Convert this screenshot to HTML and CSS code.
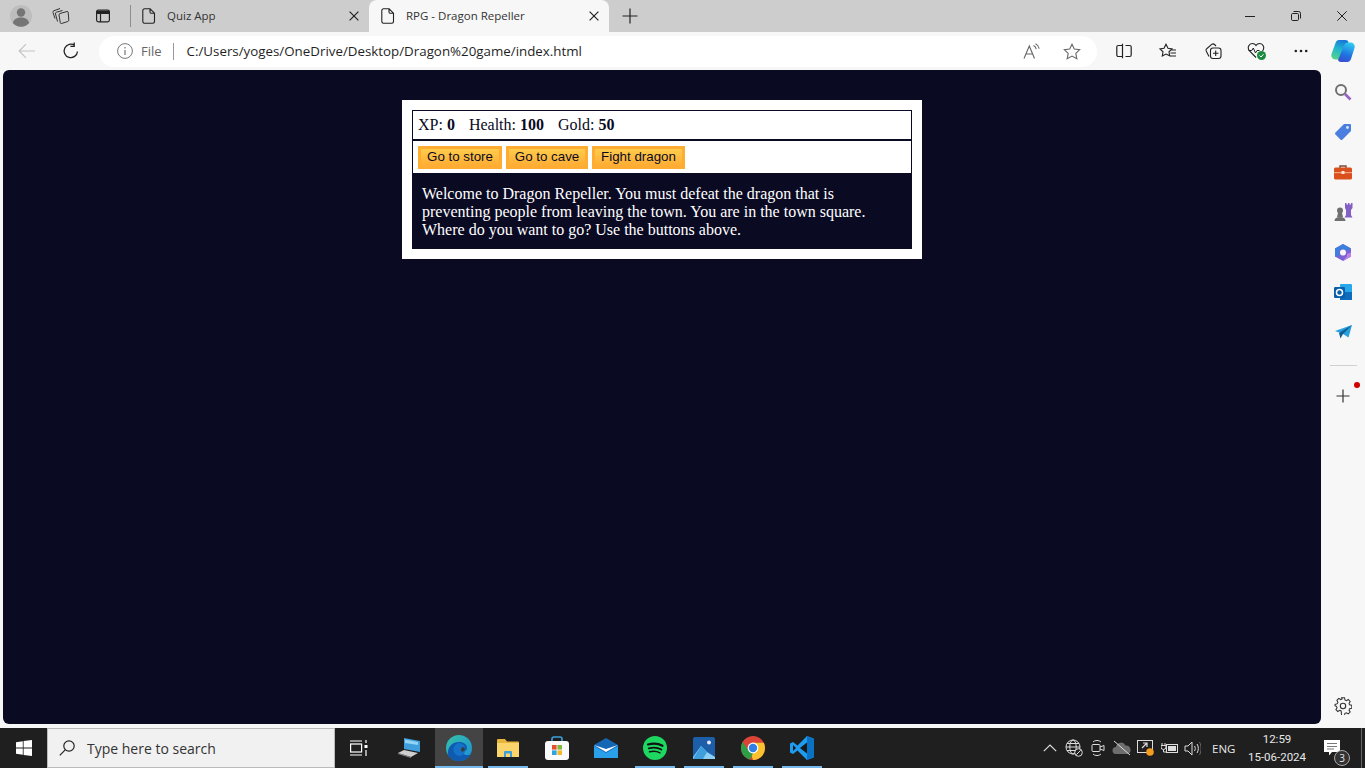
FILE: index.html
```html
<!DOCTYPE html>
<html lang="en">
<head>
    <meta charset="UTF-8">
    <title>RPG - Dragon Repeller</title>
    <link rel="stylesheet" href="styles.css">
</head>
<body>
    <div class="tabstrip">
        <span class="strip-btn profile">
            <svg width="22" height="22" viewBox="0 0 22 22"><circle cx="11" cy="11" r="11" fill="#bdbdbd"/><circle cx="11" cy="7.5" r="4.2" fill="#757575"/><path d="M2.8 18c1-4 4.2-5.6 8.2-5.6s7.2 1.6 8.2 5.6a11 11 0 0 1-16.4 0z" fill="#757575"/></svg>
        </span>
        <span class="strip-btn workspaces">
            <svg width="18" height="18" viewBox="0 0 18 18" fill="none" stroke="#333" stroke-width="1"><path d="M8 6.500 15 4.500a1 1 0 0 1 1.200.8L16.800 13a1.500 1.500 0 0 1-1 1.500L9.500 16.500a1 1 0 0 1-1.200-.8L7 8a1.500 1.500 0 0 1 1-1.500z"/><path d="M5.500 14.500 3.500 7a1.500 1.500 0 0 1 1-1.800L10.500 3.500"/><path d="M3 11.500 1 5.500a1.500 1.500 0 0 1 1-1.800L8 1.500"/></svg>
        </span>
        <span class="strip-btn vtabs">
            <svg width="16" height="16" viewBox="0 0 16 16" fill="none" stroke="#222" stroke-width="1.2"><rect x="1.6" y="2.1" width="12.8" height="11.8" rx="1.8"/><path d="M1.6 4.500h12.800" stroke-width="3"/><path d="M5.5 5v9"/></svg>
        </span>
        <span class="strip-sep"></span>
        <div class="tab">
            <svg class="page-icon" width="14" height="16" viewBox="0 0 14 16" fill="none" stroke="#222" stroke-width="1.1"><path d="M2.5.8h5.6l4.4 4.4v8.3a1.7 1.7 0 0 1-1.7 1.7H2.5A1.7 1.7 0 0 1 .8 13.5v-11A1.7 1.7 0 0 1 2.5.8zM8 .8v3.1A1.4 1.4 0 0 0 9.4 5.3h3.1"/></svg>
            <span class="tab-title">Quiz App</span>
            <svg class="tab-close" width="10" height="10" viewBox="0 0 10 10" stroke="#222" stroke-width="1.2"><path d="M.6.6l8.8 8.8M9.4.6.6 9.4"/></svg>
        </div>
        <div class="tab tab-active">
            <svg class="page-icon" width="14" height="16" viewBox="0 0 14 16" fill="none" stroke="#222" stroke-width="1.1"><path d="M2.5.8h5.6l4.4 4.4v8.3a1.7 1.7 0 0 1-1.7 1.7H2.5A1.7 1.7 0 0 1 .8 13.5v-11A1.7 1.7 0 0 1 2.5.8zM8 .8v3.1A1.4 1.4 0 0 0 9.4 5.3h3.1"/></svg>
            <span class="tab-title">RPG - Dragon Repeller</span>
            <svg class="tab-close" width="10" height="10" viewBox="0 0 10 10" stroke="#222" stroke-width="1.2"><path d="M.6.6l8.8 8.8M9.4.6.6 9.4"/></svg>
        </div>
        <span class="new-tab">
            <svg width="16" height="16" viewBox="0 0 16 16" stroke="#222" stroke-width="1.2"><path d="M8 .5v15M.5 8h15"/></svg>
        </span>
        <div class="window-btns">
            <span class="win-btn"><svg width="10" height="10" viewBox="0 0 10 10" stroke="#222"><path d="M0 5.5h10"/></svg></span>
            <span class="win-btn"><svg width="10" height="10" viewBox="0 0 10 10" fill="none" stroke="#222"><rect x=".5" y="2.5" width="7" height="7" rx="1.2"/><path d="M2.5 .5h5.2a1.8 1.8 0 0 1 1.800 1.800v5.200"/></svg></span>
            <span class="win-btn"><svg width="10" height="10" viewBox="0 0 10 10" stroke="#222"><path d="M.3.300l9.400 9.400M9.700.300l-9.400 9.400"/></svg></span>
        </div>
    </div>

    <div class="toolbar">
        <span class="nav-btn back">
            <svg width="18" height="16" viewBox="0 0 18 16" fill="none" stroke="#c4c4c4" stroke-width="1.2"><path d="M17 8H1.2M8 1.2 1.2 8 8 14.8"/></svg>
        </span>
        <span class="nav-btn reload">
            <svg width="18" height="18" viewBox="0 0 18 18" fill="none" stroke="#222" stroke-width="1.3"><path d="M15.5 9.500A6.700 6.700 0 1 1 12.800 3.500M12.200 .5v3.800H8.400"/></svg>
        </span>
        <div class="address">
            <svg class="info" width="16" height="16" viewBox="0 0 16 16" fill="none" stroke="#757575"><circle cx="8" cy="8" r="7.400"/><path d="M8 7v5M8 4v1.600" stroke-width="1.200"/></svg>
            <span class="scheme">File</span>
            <span class="addr-sep"></span>
            <span class="url">C:/Users/yoges/OneDrive/Desktop/Dragon%20game/index.html</span>
            <span class="addr-actions">
                <svg width="18" height="17" viewBox="0 0 18 17" fill="none" stroke="#666" stroke-width="1.100"><path d="M1 15.500 6.300 3l5.200 12.500M2.900 11h6.800M10.500 2.500c1.500.7 2.400 2 2.700 3.600M12.500 .8c2 1 3.300 2.700 3.700 4.800"/></svg>
                <svg width="18" height="17" viewBox="0 0 18 17" fill="none" stroke="#666" stroke-width="1.100"><path d="M9 1.200 11.300 6l5.400.7-3.900 3.700 1 5.300L9 13.100l-4.800 2.600 1-5.300L1.300 6.700 6.700 6z"/></svg>
            </span>
        </div>
        <div class="tool-icons">
            <span class="tool-btn"><svg width="16" height="16" viewBox="0 0 16 16" fill="none" stroke="#222" stroke-width="1.200"><path d="M6.500 2.500H2.300A1.500 1.500 0 0 0 .8 4v8a1.500 1.500 0 0 0 1.500 1.500h4.200zM6.500 .8v14.400M9.500 2.500h4.200A1.500 1.500 0 0 1 15.200 4v8a1.500 1.500 0 0 1-1.500 1.500H9.500"/></svg></span>
            <span class="tool-btn"><svg width="18" height="17" viewBox="0 0 18 17" fill="none" stroke="#222" stroke-width="1.100"><path d="M7 1.200 9 5.300l4 .6-3 2.900.7 4L7 11l-3.700 2 .7-4.200L1 5.900l4-.6zM12 7h5M11.500 10h5.500M11 13h6"/></svg></span>
            <span class="tool-btn"><svg width="18" height="18" viewBox="0 0 18 18" fill="none" stroke="#222" stroke-width="1.100"><rect x="6.500" y="6" width="10.500" height="10.500" rx="2.400"/><path d="M11.700 8.500v5.500M9 11.200h5.500M5 14.500 2.200 9A2 2 0 0 1 3 6.500L8 2.200a2 2 0 0 1 2.500.3L12 4"/></svg></span>
            <span class="tool-btn"><svg width="20" height="19" viewBox="0 0 20 19"><path d="M9 15.500 2.500 9C-.2 5.500 2 1.500 5.300 1.500 7 1.500 8.300 2.300 9 3.500c.7-1.200 2-2 3.700-2 3.300 0 5.500 4 2.800 7.500" fill="none" stroke="#222" stroke-width="1.100"/><path d="M1.500 8.500h3.300l1.500-2.500 2.200 5 1.500-2.500h2.500" fill="none" stroke="#222"/><circle cx="14.500" cy="13.500" r="4.500" fill="#1c8a3f"/><path d="M12.500 13.500l1.500 1.500 2.500-2.800" fill="none" stroke="#fff"/></svg></span>
            <span class="tool-btn"><svg width="14" height="4" viewBox="0 0 14 4" fill="#222"><circle cx="1.800" cy="2" r="1.300"/><circle cx="7" cy="2" r="1.300"/><circle cx="12.200" cy="2" r="1.300"/></svg></span>
        </div>
        <span class="copilot">
            <svg width="24" height="22" viewBox="0 0 24 22">
                <defs>
                    <linearGradient id="copA" x1="0.600" y1="0" x2="0.300" y2="1"><stop offset="0" stop-color="#1878d8"/><stop offset=".45" stop-color="#22b4d0"/><stop offset="1" stop-color="#52d488"/></linearGradient>
                    <linearGradient id="copB" x1="0.600" y1="0" x2="0.300" y2="1"><stop offset="0" stop-color="#30c8f0"/><stop offset=".6" stop-color="#1e74e0"/><stop offset="1" stop-color="#3a4fd0"/></linearGradient>
                </defs>
                <path d="M8 0h6.500c1.500 0 2.500.8 3 2L12 16.500c-.8 2-2.200 3-4 3H4.500C1.500 19.500-.5 17 .5 14L4.500 3C5.200 1 6.500 0 8 0z" fill="url(#copA)"/>
                <path d="M16.500 22H10c-1.500 0-2.500-.8-3-2L13 5.500C13.800 3.500 15 2.500 17 2.500h2.500c3 0 5 2.500 4 5.500l-3.500 11c-.7 2-2 3-3.500 3z" fill="url(#copB)"/>
            </svg>
        </span>
    </div>

    <div class="main-row">
        <main class="viewport">
            <div id="game">
                <div id="stats">
                    <span class="stat">XP: <strong>0</strong></span>
                    <span class="stat">Health: <strong>100</strong></span>
                    <span class="stat">Gold: <strong>50</strong></span>
                </div>
                <div id="controls">
                    <button class="btn-store">Go to store</button>
                    <button class="btn-cave">Go to cave</button>
                    <button class="btn-fight">Fight dragon</button>
                </div>
                <div id="text">Welcome to Dragon Repeller. You must defeat the dragon that is preventing people from leaving the town. You are in the town square. Where do you want to go? Use the buttons above.</div>
            </div>
        </main>
        <aside class="sidebar">
            <span class="side-slot"><svg width="18" height="18" viewBox="0 0 18 18" fill="none"><circle cx="7" cy="7" r="5" stroke="#6f6f6f" stroke-width="2"/><path d="M11 11l5.500 5.500" stroke="#9a62c4" stroke-width="2.600"/></svg></span>
            <span class="side-slot"><svg width="18" height="18" viewBox="0 0 18 18"><path d="M10 1h6a1 1 0 0 1 1 1v6L8.500 16.500a1.500 1.500 0 0 1-2.100 0L1.500 11.600a1.500 1.500 0 0 1 0-2.100z" fill="#4a7fe0"/><circle cx="13.500" cy="4.500" r="1.400" fill="#dbe7fb"/></svg></span>
            <span class="side-slot"><svg width="18" height="16" viewBox="0 0 18 16"><path d="M6 4V2h6v2" fill="none" stroke="#7a4a33" stroke-width="1.400"/><rect y="3.500" width="18" height="12" rx="1.500" fill="#d9501e"/><rect y="8" width="18" height="1.200" fill="#f2a27e"/><rect x="7.500" y="7" width="3" height="3" fill="#fbe3d6"/></svg></span>
            <span class="side-slot"><svg width="20" height="20" viewBox="0 0 20 20"><circle cx="7" cy="8.500" r="3" fill="#6f6f6f"/><path d="M5 11h4l1 4H4zM1.500 19c0-2.500 2-4 5.500-4s5.500 1.500 5.500 4z" fill="#6f6f6f"/><path d="M12 1h1.500v1.500H15V1h1.500v1.500H18V1h1.500v5L18 8v5l1.500 2.500h-8L13 13V8l-1-2z" fill="#8560c4"/></svg></span>
            <span class="side-slot"><svg width="18" height="19" viewBox="0 0 18 19"><path d="M9 1l8 4.500v8L9 18l-8-4.500v-8z" fill="#7d62d6"/><path d="M9 1l8 4.500L13 8 9 5.800 5 8v5.500L1 13.500v-8z" fill="#3c7fdc"/><path d="M9 18l8-4.500v-4L13 11v2z" fill="#c07fe6"/><circle cx="9" cy="9.500" r="3" fill="#f7f7f7"/></svg></span>
            <span class="side-slot"><svg width="18" height="18" viewBox="0 0 18 18"><rect x="6" y="1" width="12" height="16" rx="1" fill="#28a8ea"/><rect x="6" y="9" width="12" height="8" fill="#0f6cbd"/><rect y="4" width="11" height="11" rx="1.200" fill="#0a5fa8"/><circle cx="5.500" cy="9.500" r="3" fill="none" stroke="#fff" stroke-width="1.500"/></svg></span>
            <span class="side-slot"><svg width="17" height="14" viewBox="0 0 17 14"><path d="M0 6 17 0l-3.500 12.500L8 9z" fill="#27a0df"/><path d="M4 8l1.500 5.500L8 9l9-9z" fill="#105f94"/></svg></span>
            <span class="side-sep"></span>
            <span class="side-slot side-add">
                <svg width="14" height="14" viewBox="0 0 14 14" stroke="#333" stroke-width="1.200"><path d="M7 .5v13M.5 7h13"/></svg>
                <i class="red-dot"></i>
            </span>
            <span class="side-spacer"></span>
            <svg class="gear" width="18" height="18" viewBox="0 0 18 18" fill="none" stroke="#333" stroke-width="1.100"><circle cx="9" cy="9" r="2.700"/><path d="M7.500 1h3l.5 2.300 1.500.7 2-1.200 2 2.200-1.200 2 .6 1.500 2.300.5v3l-2.300.5-.6 1.500 1.200 2-2 2-2-1.200-1.500.6-.5 2.300h-3L7 14.900l-1.500-.6-2 1.200-2-2 1.200-2L2 10 .6 9.500V8L3 7.200l.6-1.500-1.100-2 2-2 2 1.200 1.500-.6z" transform="translate(.5 -.2) scale(.95)"/></svg>
        </aside>
    </div>

    <footer class="taskbar">
        <span class="start">
            <svg width="16" height="16" viewBox="0 0 16 16" fill="#fff"><path d="M0 2.200 6.800 1.200v6.400H0zM7.600 1.100 16 0v7.600H7.600zM0 8.400h6.800v6.400L0 13.800zM7.600 8.400H16V16l-8.400-1.100z"/></svg>
        </span>
        <div class="search">
            <svg width="16" height="16" viewBox="0 0 16 16" fill="none" stroke="#222" stroke-width="1.200"><circle cx="10" cy="6" r="5.200"/><path d="M6.200 9.800 .8 15.400"/></svg>
            <span>Type here to search</span>
        </div>
        <span class="task-item task-view">
            <svg width="18" height="16" viewBox="0 0 18 16" fill="none" stroke="#fff" stroke-width="1.200"><path d="M0 1h12M0 15h12"/><rect x=".6" y="4" width="11" height="8"/><path d="M16 0v3"/><rect x="14.500" y="5" width="3" height="3" fill="#fff" stroke="none"/><path d="M16 10v6"/></svg>
        </span>
        <span class="task-item computer">
            <svg width="24" height="22" viewBox="0 0 24 22"><path d="M7 1 23 4v11L7 12z" fill="#3f9fdd"/><path d="M8 2.500 21 5v3L8 6z" fill="#8fd3f5"/><path d="M1 16l6-3 14 3-7 4z" fill="#cfcfcf"/><path d="M1 16l13 4v1L1 17z" fill="#8a8a8a"/></svg>
        </span>
        <span class="task-item pinned edge-item">
            <svg width="26" height="26" viewBox="0 0 26 26">
                <defs><linearGradient id="edgeA" x1="0" y1="0" x2="1" y2="1"><stop offset="0" stop-color="#36c3a6"/><stop offset="1" stop-color="#1b8ddb"/></linearGradient></defs>
                <circle cx="13" cy="13" r="13" fill="url(#edgeA)"/>
                <path d="M2 20C1 11 7 7 13 7c5 0 8 2.500 8 6 0 2-1.500 3.500-4 3.500-1 0-1.500-.3-1.500-.3 1.500 3.500 6 5 9.500 3C22.500 23.500 18 26 13 26 8 26 4 24 2 20z" fill="#0f5bb0"/>
                <ellipse cx="13.500" cy="14.500" rx="6" ry="6.500" fill="#1473c9"/>
                <path d="M19 14c0 1.800-1.500 2.800-3.500 2.500-1-1.500-.5-3.500 1-4.500 1.500 0 2.500 1 2.500 2z" fill="#3d3d3d"/>
            </svg>
        </span>
        <span class="task-item pinned">
            <svg width="24" height="20" viewBox="0 0 24 20"><path d="M1 2a1 1 0 0 1 1-1h7l2 2.500h11a1 1 0 0 1 1 1V18a1 1 0 0 1-1 1H2a1 1 0 0 1-1-1z" fill="#e8b53c"/><rect x="1" y="5" width="22" height="14" fill="#fbd56c"/><path d="M8 19v-5a1 1 0 0 1 1-1h6a1 1 0 0 1 1 1v5h-2v-3.500h-4V19z" fill="#3f9fdd"/></svg>
        </span>
        <span class="task-item store">
            <svg width="24" height="24" viewBox="0 0 24 24"><path d="M7 6V3a2 2 0 0 1 2-2h6a2 2 0 0 1 2 2v3" fill="none" stroke="#3ba1dc" stroke-width="1.600"/><rect y="5" width="24" height="19" rx="3" fill="#fafafa"/><rect x="7" y="9" width="4.600" height="4.600" fill="#e8502b"/><rect x="12.400" y="9" width="4.600" height="4.600" fill="#7fba3d"/><rect x="7" y="14.400" width="4.600" height="4.600" fill="#2ca3e3"/><rect x="12.400" y="14.400" width="4.600" height="4.600" fill="#f5b72a"/></svg>
        </span>
        <span class="task-item mail">
            <svg width="24" height="20" viewBox="0 0 24 20"><path d="M0 7 12 0l12 7v13H0z" fill="#1467b5"/><path d="M0 8l12 7 12-7v12H0z" fill="#2aa0ea"/><path d="M0 7l12 7 12-7-12 4z" fill="#fff"/></svg>
        </span>
        <span class="task-item pinned">
            <svg width="24" height="24" viewBox="0 0 24 24" fill="none" stroke="#121212" stroke-linecap="round"><circle cx="12" cy="12" r="12" fill="#1ed760" stroke="none"/><path d="M5 8.500c5-1.400 10.500-1 14.500 1.300" stroke-width="2.200"/><path d="M5.800 12.300c4.500-1.200 9-.8 12.500 1.200" stroke-width="1.900"/><path d="M6.500 15.800c4-1 7.500-.6 10.500 1" stroke-width="1.500"/></svg>
        </span>
        <span class="task-item pinned">
            <svg width="22" height="22" viewBox="0 0 22 22"><rect width="22" height="22" rx="2" fill="#1d5ea8"/><path d="M0 20 8 9l6 6 8 5v2H0z" fill="#8ecff5"/><path d="M8 9l6 6-4 7H0z" fill="#3f9fdd"/><circle cx="16" cy="5.500" r="2" fill="#e8e8f8"/></svg>
        </span>
        <span class="task-item pinned">
            <svg width="24" height="24" viewBox="0 0 24 24"><circle cx="12" cy="12" r="12" fill="#dd4438"/><path d="M12 6.800h10.800A12 12 0 0 1 12 24l-4-12z" fill="#fbc02d"/><path d="M1.600 6 8 15l4 2.200L9 23.600A12 12 0 0 1 1.600 6z" fill="#2e9f47"/><circle cx="12" cy="12" r="5.400" fill="#fff"/><circle cx="12" cy="12" r="4.200" fill="#2f7fe6"/></svg>
        </span>
        <span class="task-item pinned">
            <svg width="24" height="24" viewBox="0 0 24 24"><path d="M17 0 7.500 9.500 3 6 0 7.500v9L3 18l4.500-3.500L17 24l7-2.800V2.800z" fill="#1f9cf0"/><path d="M17 6.500 10 12l7 5.500z" fill="#1a1a1a"/><path d="M3 9v6l3-3z" fill="#1a1a1a"/><path d="M17 0l7 2.800v18.400L17 24z" fill="#0a72c2"/></svg>
        </span>
        <div class="tray">
            <span class="tray-icon"><svg width="14" height="8" viewBox="0 0 14 8" fill="none" stroke="#ddd" stroke-width="1.200"><path d="M.8 7.200 7 1l6.200 6.200"/></svg></span>
            <span class="tray-icon"><svg width="18" height="18" viewBox="0 0 18 18" fill="none" stroke="#ddd"><circle cx="8" cy="8" r="7"/><ellipse cx="8" cy="8" rx="3.200" ry="7"/><path d="M1 8h14M2 4.500h12M2 11.500h12"/><circle cx="13.500" cy="13.500" r="3.800" fill="#1f1f1f"/><path d="M11.300 15.700l4.400-4.400"/></svg></span>
            <span class="tray-icon"><svg width="14" height="18" viewBox="0 0 14 18" fill="none" stroke="#ddd"><path d="M2 3c2-2 6-2 8 0M2 15c2 2 6 2 8 0"/><rect x="1" y="5.500" width="8" height="7" rx="1"/><path d="M9 8l4-1.500v5L9 10"/></svg></span>
            <span class="tray-icon"><svg width="20" height="16" viewBox="0 0 20 16"><path d="M4 14a3.500 3.500 0 0 1 0-7 5 5 0 0 1 9.500-1.500A4.500 4.500 0 0 1 16 14z" fill="#6e6e6e"/><path d="M2 1l16 14" stroke="#ddd"/></svg></span>
            <span class="tray-icon"><svg width="18" height="18" viewBox="0 0 18 18" fill="none" stroke="#ddd"><rect x=".5" y="1.500" width="15" height="12"/><path d="M5 9l5-5M6 4h4v4" stroke-width="1.200"/><circle cx="13" cy="13" r="3.800" fill="#f39c1f" stroke="none"/></svg></span>
            <span class="tray-icon"><svg width="18" height="12" viewBox="0 0 18 12" fill="none" stroke="#ddd"><path d="M1 1v2.500M4 1v2.500M0 3.500h5v1.500a2.500 2.500 0 0 1-5 0zM2.500 7.500V10h3"/><rect x="5.500" y="2.500" width="11" height="8"/><rect x="7" y="4" width="8" height="5" fill="#ddd" stroke="none"/></svg></span>
            <span class="tray-icon tray-volume"><svg width="17" height="15" viewBox="0 0 17 15" fill="none" stroke="#ddd"><path d="M1 5h3l4-4v13l-4-4H1zM10.500 5c1 1.500 1 3.500 0 5M13 3c1.800 2.500 1.800 6.500 0 9"/><path d="M15.500 1c2 3.500 2 9.500 0 13" stroke="#666"/></svg></span>
            <span class="lang">ENG</span>
            <div class="clock"><span>12:59</span><span>15-06-2024</span></div>
            <span class="notif">
                <svg width="18" height="17" viewBox="0 0 18 17" fill="#fff"><path d="M0 0h16v12H8l-3 3.500V12H0z"/><path d="M3 3.500h10M3 6.500h10M3 9h7" stroke="#555" stroke-width=".8"/></svg>
                <b class="notif-count">3</b>
            </span>
            <span class="show-desktop"></span>
        </div>
    </footer>
</body>
</html>
```

FILE: styles.css
```css
* {
    box-sizing: border-box;
}
html, body {
    margin: 0;
    height: 100%;
}
body {
    width: 1365px;
    height: 768px;
    overflow: hidden;
    background-color: #f7f7f7;
    display: flex;
    flex-direction: column;
    font-family: "Open Sans", "Noto Sans", sans-serif;
}
svg {
    display: block;
    flex: none;
}

/* tab strip */
.tabstrip {
    height: 32px;
    background-color: #cdcdcd;
    display: flex;
    align-items: center;
    flex: none;
}
.strip-btn {
    display: flex;
    justify-content: center;
}
.profile {
    width: 42px;
}
.workspaces {
    width: 38px;
}
.vtabs {
    width: 46px;
}
.strip-sep {
    width: 1px;
    height: 22px;
    background-color: #8e8e8e;
    margin-left: 4px;
}
.tab {
    width: 238px;
    height: 32px;
    display: flex;
    align-items: center;
    padding: 0 10px 2px 11px;
    font-size: 11.500px;
    color: #333;
}
.tab-active {
    width: 240px;
    background-color: #f7f7f7;
    border-radius: 8px 8px 0 0;
    padding-left: 12px;
}
.page-icon {
    margin: 2px 11px 0 0;
}
.tab-close {
    margin-top: 2px;
}
.tab-title {
    flex: 1;
    white-space: nowrap;
}
.new-tab {
    margin-left: 13px;
}
.window-btns {
    margin-left: auto;
    display: flex;
}
.win-btn {
    width: 46px;
    display: flex;
    justify-content: center;
}

/* toolbar */
.toolbar {
    height: 38px;
    display: flex;
    align-items: center;
    flex: none;
}
.nav-btn {
    display: flex;
    justify-content: center;
}
.back {
    width: 54px;
}
.reload {
    width: 34px;
}
.address {
    width: 998px;
    height: 31px;
    margin-left: 11px;
    background-color: #fff;
    border-radius: 16px;
    display: flex;
    align-items: center;
    padding: 0 16px 0 18px;
    font-size: 13px;
}
.scheme {
    color: #666;
    margin-left: 8px;
}
.addr-sep {
    width: 1px;
    height: 17px;
    background-color: #999;
    margin: 0 13px 0 11px;
}
.url {
    color: #1f1f1f;
    white-space: nowrap;
    font-size: 13.330px;
}
.addr-actions {
    margin-left: auto;
    display: flex;
    gap: 22px;
}
.tool-icons {
    display: flex;
    margin-left: 5px;
}
.tool-btn {
    width: 44.300px;
    display: flex;
    justify-content: center;
    align-items: center;
}
.copilot {
    margin-left: 8px;
}

/* page area */
.main-row {
    flex: 1;
    display: flex;
    min-height: 0;
}
.viewport {
    width: 1318px;
    margin-left: 3px;
    margin-bottom: 4px;
    background-color: #0a0a23;
    border-radius: 6px;
    color: #fff;
    font-family: "Liberation Serif", serif;
    font-size: 16px;
}
#game {
    width: 520px;
    margin: 30px auto 0;
    background-color: #fff;
    padding: 10px;
}
#stats, #controls {
    border: 1px solid #0a0a23;
    padding: 5px;
    color: #0a0a23;
}
.stat {
    padding-right: 10px;
}
#stats {
    height: 30px;
    line-height: 18px;
}
#controls {
    height: 34px;
    display: flex;
    gap: 4px;
    padding-bottom: 0;
}
button {
    height: 23px;
    padding: 0 3px 2px;
    color: #0a0a23;
    background-color: #feac32;
    background-image: linear-gradient(#fecc4c, #ffac33);
    border: 3px solid #feac32;
    font-family: "Liberation Sans", sans-serif;
    font-size: 13.333px;
    cursor: pointer;
}
.btn-store {
    width: 84px;
}
.btn-cave {
    width: 82px;
}
.btn-fight {
    width: 93px;
}
#text {
    background-color: #0a0a23;
    color: #fff;
    padding: 11px 10px 10px;
    line-height: 18px;
}

/* right sidebar */
.sidebar {
    width: 44px;
    display: flex;
    flex-direction: column;
    align-items: center;
    padding: 2px 0 13px;
}
.side-slot {
    height: 40px;
    display: flex;
    align-items: center;
    justify-content: center;
}
.side-sep {
    width: 27px;
    height: 1px;
    background-color: #d0d0d0;
    margin: 13px 0 10px;
}
.side-add {
    position: relative;
}
.red-dot {
    position: absolute;
    top: 6px;
    right: -10px;
    width: 6px;
    height: 6px;
    border-radius: 50%;
    background-color: #d00000;
}
.side-spacer {
    flex: 1;
}

/* taskbar */
.taskbar {
    height: 40px;
    background-color: #1f1f1f;
    display: flex;
    align-items: center;
    flex: none;
}
.start {
    width: 47px;
    display: flex;
    justify-content: center;
}
.search {
    width: 288px;
    height: 40px;
    background-color: #f1f1f1;
    border: 1px solid #bbb;
    display: flex;
    align-items: center;
    gap: 12px;
    padding-left: 11px;
    font-size: 14px;
    color: #333;
}
.task-item {
    width: 49px;
    height: 40px;
    display: flex;
    justify-content: center;
    align-items: center;
}
.task-view {
    width: 48px;
}
.computer {
    width: 52px;
}
.pinned {
    background: linear-gradient(#76b9ed, #76b9ed) center bottom / 40px 2px no-repeat;
}
.edge-item {
    width: 48px;
    background: linear-gradient(#76b9ed, #76b9ed) center bottom / 100% 2px no-repeat, #444;
}
.tray {
    margin-left: auto;
    display: flex;
    align-items: center;
    color: #e8e8e8;
}
.tray-icon {
    width: 24px;
    display: flex;
    justify-content: center;
}
.tray-volume {
    width: 20px;
}
.lang {
    width: 23px;
    margin-left: 10px;
    font-size: 11.500px;
    white-space: nowrap;
}
.clock {
    width: 72px;
    margin-left: 6px;
    display: flex;
    flex-direction: column;
    align-items: center;
    font-family: Roboto, sans-serif;
    font-size: 11.500px;
    line-height: 18px;
}
.notif {
    position: relative;
    margin: 0 19px 0 11px;
}
.notif-count {
    position: absolute;
    right: -8px;
    bottom: -9px;
    width: 16px;
    height: 16px;
    border-radius: 50%;
    background-color: #333;
    border: 1px solid #aaa;
    font-size: 10px;
    font-weight: normal;
    line-height: 14px;
    text-align: center;
}
.show-desktop {
    width: 1px;
    height: 40px;
    background-color: #666;
    margin-right: 3px;
}
```
